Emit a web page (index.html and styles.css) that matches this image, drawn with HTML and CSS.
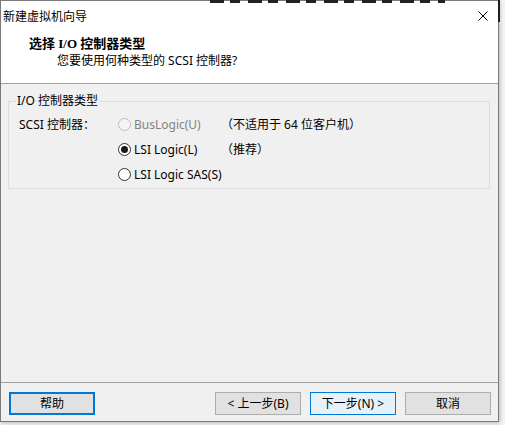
FILE: index.html
```html
<!DOCTYPE html>
<html lang="zh-CN">
<head>
<meta charset="utf-8">
<title>新建虚拟机向导</title>
<link rel="stylesheet" href="styles.css">
</head>
<body>
<div class="window">
  <div class="titlebar">
    <span class="title">新建虚拟机向导</span>
    <svg class="close" width="10" height="10" viewBox="0 0 10 10"><path d="M0.5 0.5 L9.5 9.5 M9.5 0.5 L0.5 9.5" stroke="#000" stroke-width="1" fill="none"/></svg>
  </div>
  <div class="header">
    <div class="h-title">选择 I/O 控制器类型</div>
    <div class="h-sub">您要使用何种类型的 SCSI 控制器?</div>
  </div>
  <div class="content">
    <fieldset class="group">
      <legend>I/O 控制器类型</legend>
      <div class="grid">
        <div class="label">SCSI 控制器：</div>
        <div class="opt disabled"><span class="radio"></span>BusLogic(U)</div>
        <div class="note">（不适用于 64 位客户机）</div>
        <div></div>
        <div class="opt"><span class="radio checked"></span>LSI Logic(L)</div>
        <div class="note">（推荐）</div>
        <div></div>
        <div class="opt"><span class="radio"></span>LSI Logic SAS(S)</div>
        <div></div>
      </div>
    </fieldset>
  </div>
  <div class="footer">
    <button class="btn focused">帮助</button>
    <div class="spacer"></div>
    <button class="btn">&lt; 上一步(B)</button>
    <button class="btn default">下一步(N) &gt;</button>
    <button class="btn">取消</button>
  </div>
</div>
<div class="bg-top"></div>
<div class="bg-right"></div>
</body>
</html>
```

FILE: styles.css
```css
html, body {
  margin: 0;
  padding: 0;
}
body {
  width: 505px;
  height: 425px;
  background: #f4f4f4;
  font-family: "Noto Sans", "Noto Sans CJK SC", sans-serif;
  font-size: 12px;
  color: #000;
  overflow: hidden;
  position: relative;
}
.window {
  width: 499px;
  height: 422px;
  box-sizing: border-box;
  border: 1px solid #7a7a7a;
  background: #f0f0f0;
  display: flex;
  flex-direction: column;
  box-shadow: 1px 1px 4px rgba(0, 0, 0, 0.25);
}
.titlebar {
  height: 29px;
  background: #fff;
  display: flex;
  align-items: center;
  padding-left: 2px;
  padding-right: 10px;
  flex: none;
}
.title {
  flex: 1;
  line-height: 16px;
  font-family: "Noto Sans CJK SC", sans-serif;
}
.close {
  display: block;
}
.header {
  height: 53px;
  background: #fff;
  border-bottom: 1px solid #a0a0a0;
  padding-top: 6px;
  box-sizing: content-box;
  flex: none;
}
.header > div { line-height: 16px; }
.h-title {
  padding-left: 28px;
  font-family: "Liberation Serif", "Noto Sans CJK SC", serif;
  font-weight: bold;
  font-size: 13px;
  height: 16px;
}
.h-sub {
  padding-left: 56px;
  margin-top: 1px;
  height: 16px;
}
.header {
  height: 47px;
}
.content {
  flex: 1;
  padding: 9px 8px 0 7px;
}
.group {
  margin: 0;
  padding: 3px 0 1px 10px;
  border: 1px solid #dcdcdc;
  min-width: 0;
}
.group legend {
  padding: 0 1px;
  margin-left: -3px;
  line-height: 16px;
}
.grid {
  display: grid;
  grid-template-columns: 99px 103px auto;
  grid-auto-rows: 25px;
  align-items: center;
}
.label, .opt, .note {
  line-height: 16px;
  white-space: nowrap;
}
.opt {
  display: flex;
  align-items: center;
}
.radio {
  width: 13px;
  height: 13px;
  box-sizing: border-box;
  border: 1px solid #333;
  border-radius: 50%;
  background: #fff;
  margin-right: 3px;
  position: relative;
  flex: none;
}
.radio.checked::after {
  content: "";
  position: absolute;
  left: 2px;
  top: 2px;
  width: 7px;
  height: 7px;
  border-radius: 50%;
  background: #1a1a1a;
}
.opt.disabled { color: #838383; }
.opt.disabled .radio {
  border-color: #bcbcbc;
  background: #f4f4f4;
}
.footer {
  flex: none;
  border-top: 1px solid #a0a0a0;
  padding: 9px 7px 6px 8px;
  display: flex;
  gap: 9px;
}
.spacer { flex: 1; }
.btn {
  width: 86px;
  height: 23px;
  box-sizing: border-box;
  border: 1px solid #adadad;
  background: #e1e1e1;
  font-family: "Noto Sans", "Noto Sans CJK SC", sans-serif;
  font-size: 12px;
  color: #000;
  padding: 0;
  margin: 0;
  line-height: 16px;
}
.btn.focused {
  border: 2px solid #0078d7;
}
.btn.default {
  border-color: #0078d7;
  background: #e5f1fb;
}
.bg-top {
  position: absolute;
  left: 210px;
  top: 0;
  width: 235px;
  height: 3px;
  background: repeating-linear-gradient(90deg, #222 0 14px, transparent 14px 20px, #222 20px 30px, transparent 30px 38px);
}
.bg-right {
  position: absolute;
  left: 498px;
  top: 0;
  width: 2px;
  height: 22px;
  background: #1e1e1e;
}
```
